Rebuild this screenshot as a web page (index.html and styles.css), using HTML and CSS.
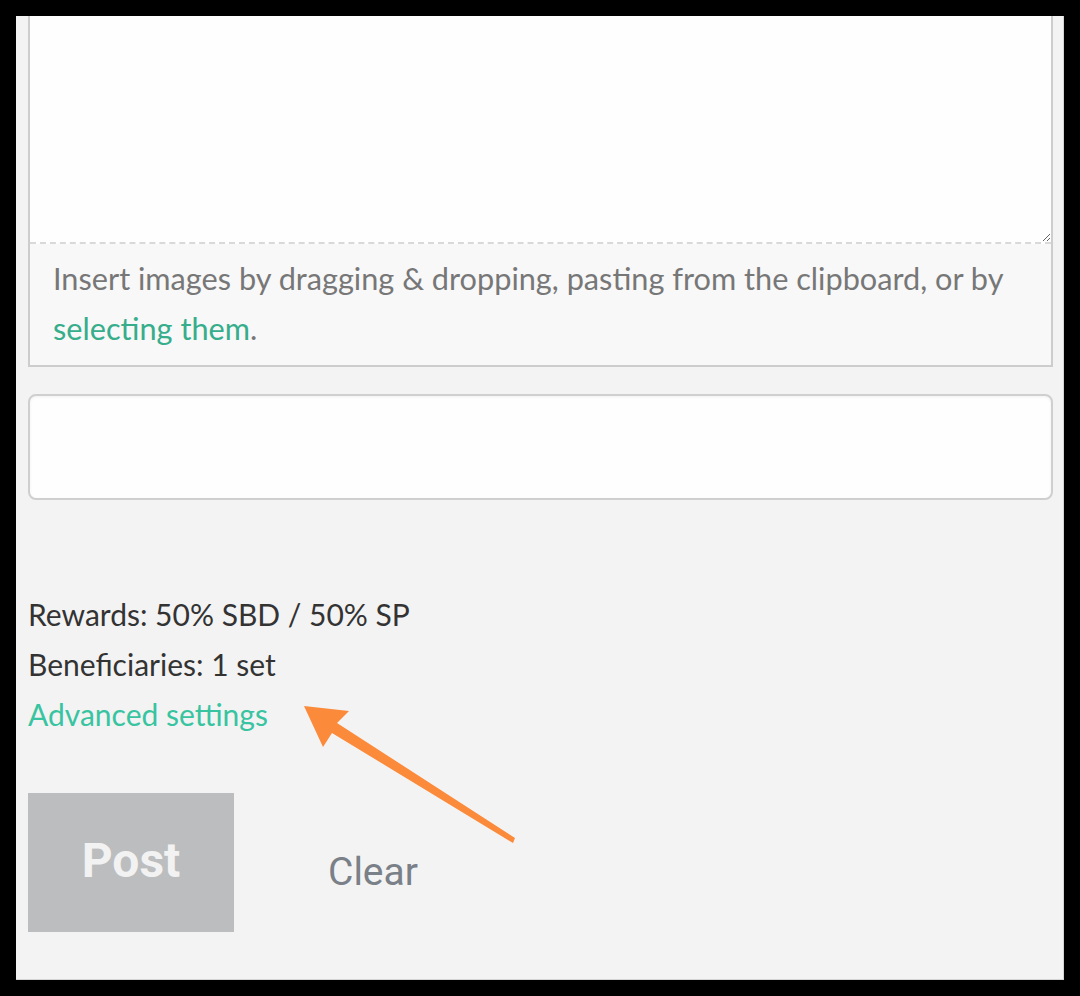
FILE: index.html
```html
<!DOCTYPE html>
<html lang="en">
<head>
  <meta charset="UTF-8">
  <title>Submit a Story</title>
  <link rel="stylesheet" href="styles.css">
</head>
<body>
  <div class="page">
    <div class="editor">
      <textarea class="editor-body"></textarea>
      <p class="dropzone">
        Insert images by dragging &amp; dropping, pasting from the clipboard, or by
        <a href="#" class="link">selecting them</a>.
      </p>
    </div>

    <input class="tags-input" type="text">

    <div class="options">
      <div class="option">Rewards: 50% SBD / 50% SP</div>
      <div class="option">Beneficiaries: 1 set</div>
      <a href="#" class="option link advanced">Advanced settings</a>
    </div>

    <div class="actions">
      <button class="btn-post" disabled>Post</button>
      <button class="btn-clear">Clear</button>
    </div>

    <!-- callout arrow pointing at the advanced settings link -->
    <svg class="callout-arrow" width="240" height="160" viewBox="0 0 240 160">
      <polygon fill="#fb8a3a" points="24,10 69,15 57,27 235,142 233,147 52,37 43,51"/>
    </svg>
  </div>
</body>
</html>
```

FILE: styles.css
```css
body {
  margin: 0;
  background: #000;
  padding: 16px;
  font-family: 'Lato', sans-serif;
}

.page {
  position: relative;
  height: 963px;
  background: #f3f3f3;
  border-right: 1px solid #d4d4d4;
  border-bottom: 1px solid #d4d4d4;
  padding: 0 10px 0 12px;
  overflow: hidden;
}

.editor {
  background: #f8f8f8;
  border: 2px solid #cdcdcd;
  border-top: none;
}

.editor-body {
  display: block;
  width: 100%;
  height: 228px;
  box-sizing: border-box;
  margin: 0;
  border: none;
  border-bottom: 2px dashed #d9d9d9;
  background: #fefefe;
  resize: vertical;
  outline: none;
}

.dropzone {
  margin: 0;
  padding: 10px 18px 11px 23px;
  font-size: 30.7px;
  line-height: 50px;
  color: #777;
}

.link {
  color: #2fb58f;
  text-decoration: none;
}

.dropzone .link {
  color: #36ad8b;
}

.tags-input {
  display: block;
  width: 100%;
  box-sizing: border-box;
  height: 106px;
  margin: 27px 0 0;
  border: 2px solid #cfcfcf;
  border-radius: 8px;
  background: #fefefe;
  box-shadow: inset 0 1px 3px rgba(0, 0, 0, 0.06);
  outline: none;
}

.options {
  margin-top: 89px;
  font-size: 30px;
  line-height: 50px;
  color: #333;
}

.option {
  display: block;
}

.advanced {
  color: #38c4a0;
}

.actions {
  display: flex;
  align-items: center;
  margin-top: 54px;
}

.btn-post {
  width: 206px;
  height: 139px;
  border: none;
  background: #bcbdbf;
  color: #f2f2f2;
  font-family: 'Roboto', sans-serif;
  font-weight: 700;
  font-size: 48px;
  padding: 0 0 4px;
}

.btn-clear {
  margin-left: 94px;
  border: none;
  background: none;
  color: #7a8088;
  font-family: 'Roboto', sans-serif;
  font-size: 39px;
  padding: 0;
  margin-top: 18px;
}

.callout-arrow {
  position: absolute;
  left: 264px;
  top: 680px;
}
```
